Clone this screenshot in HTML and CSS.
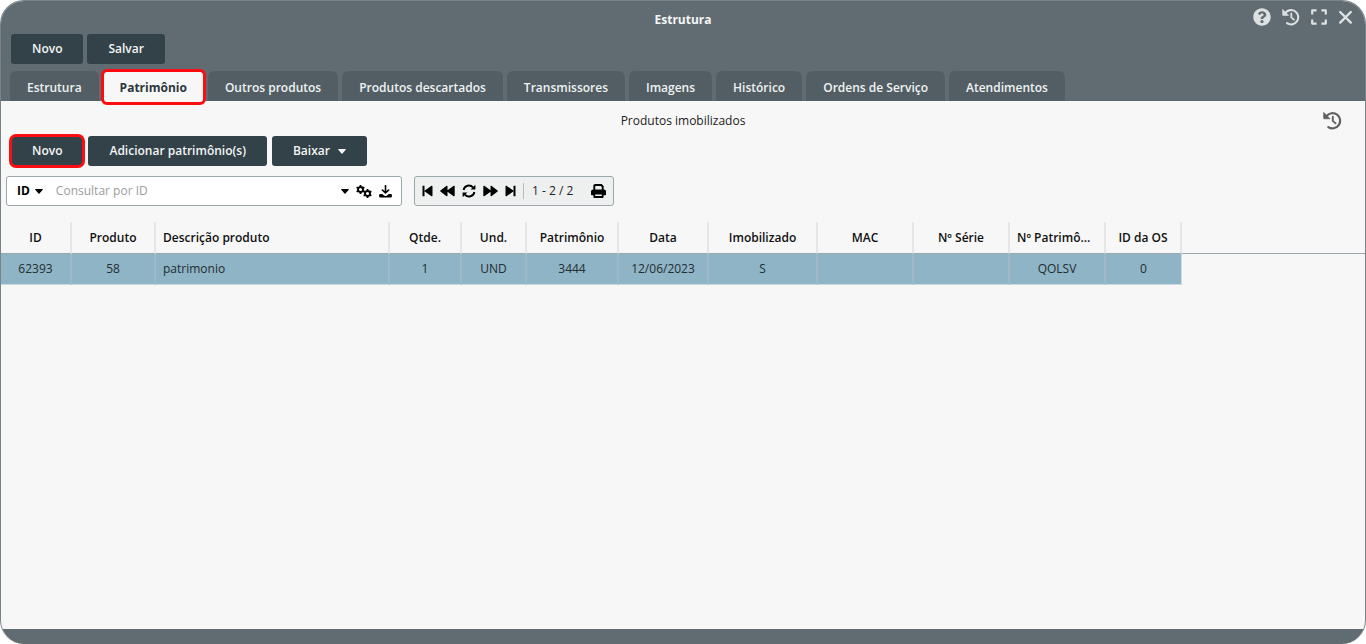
FILE: index.html
```html
<!DOCTYPE html>
<html lang="pt-BR">
<head>
<meta charset="utf-8">
<title>Estrutura</title>
<link rel="stylesheet" href="styles.css">
</head>
<body>
<svg class="defs" aria-hidden="true">
  <symbol id="history" viewBox="0 0 18 18">
    <path d="M3.4 4.8A7.2 7.2 0 1 1 5 15.2" fill="none" stroke="currentColor" stroke-width="2.1" stroke-linecap="round"/>
    <path d="M.6 1.3v5.6q0 .5.5.5h5.6z" fill="currentColor" stroke="currentColor" stroke-width=".6" stroke-linejoin="round"/>
    <path d="M9.3 5.4v4l2.6 2.3" fill="none" stroke="currentColor" stroke-width="1.8" stroke-linecap="round"/>
  </symbol>
  <symbol id="caret" viewBox="0 0 8 5"><path d="M.6 0h6.8q.8.1.3.8L4.5 4.6q-.5.5-1 0L.3.8Q-.2.1.6 0z" fill="currentColor"/></symbol>
  <symbol id="gear" viewBox="0 0 10 10">
    <circle cx="5" cy="5" r="2.8" fill="none" stroke="currentColor" stroke-width="2.1"/>
    <path d="M5 0v1.8M5 8.200V10M.7 2.500l1.500.9M7.800 6.600l1.500.9M.7 7.500l1.500-.9M7.800 3.400l1.500-.9" stroke="currentColor" stroke-width="2"/>
  </symbol>
</svg>
<main class="window">
  <header class="window-head">
    <div class="titlebar">
      <h1 class="title">Estrutura</h1>
      <div class="window-tools">
        <button class="icon-btn" aria-label="Ajuda"><svg width="18" height="18" viewBox="0 0 512 512"><path fill="currentColor" d="M504 256c0 136.997-111.043 248-248 248S8 392.997 8 256C8 119.083 119.043 8 256 8s248 111.083 248 248zM262.655 90c-54.497 0-89.255 22.957-116.549 63.758-3.536 5.286-2.353 12.415 2.715 16.258l34.699 26.31c5.205 3.947 12.621 3.008 16.665-2.122 17.864-22.658 30.113-35.797 57.303-35.797 20.429 0 45.698 13.148 45.698 32.958 0 14.976-12.363 22.667-32.534 33.976C247.128 238.528 216 254.941 216 296v4c0 6.627 5.373 12 12 12h56c6.627 0 12-5.373 12-12v-1.333c0-28.462 83.186-29.647 83.186-106.667 0-58.002-60.165-102-116.531-102zM256 338c-25.365 0-46 20.635-46 46 0 25.364 20.635 46 46 46s46-20.636 46-46c0-25.365-20.635-46-46-46z"/></svg></button>
        <button class="icon-btn" aria-label="Histórico"><svg width="18" height="18"><use href="#history"/></svg></button>
        <button class="icon-btn" aria-label="Expandir"><svg width="16" height="16" viewBox="0 0 16 16" fill="none" stroke="currentColor" stroke-width="2.2" stroke-linejoin="round"><path d="M1.2 5.6V1.4h4.4M10.4 1.4h4.4v4.2M14.8 10.4v4.2h-4.4M5.6 14.6H1.2v-4.2"/></svg></button>
        <button class="icon-btn" aria-label="Fechar"><svg width="15" height="15" viewBox="0 0 15 15" fill="none" stroke="currentColor" stroke-width="2.4" stroke-linecap="round"><path d="M2.2 2l10.6 10.6M12.8 2L2.2 12.6"/></svg></button>
      </div>
    </div>
    <div class="form-actions">
      <button class="btn">Novo</button>
      <button class="btn">Salvar</button>
    </div>
    <nav class="tabs" role="tablist">
      <button class="tab" role="tab">Estrutura</button>
      <button class="tab active" role="tab" aria-selected="true">Patrimônio</button>
      <button class="tab" role="tab">Outros produtos</button>
      <button class="tab" role="tab">Produtos descartados</button>
      <button class="tab" role="tab">Transmissores</button>
      <button class="tab" role="tab">Imagens</button>
      <button class="tab" role="tab">Histórico</button>
      <button class="tab" role="tab">Ordens de Serviço</button>
      <button class="tab" role="tab">Atendimentos</button>
    </nav>
  </header>

  <section class="panel">
    <div class="panel-head">
      <h2 class="panel-title">Produtos imobilizados</h2>
      <button class="icon-btn panel-history" aria-label="Histórico"><svg width="19" height="19"><use href="#history"/></svg></button>
    </div>
    <div class="panel-actions">
      <button class="btn marked">Novo</button>
      <button class="btn">Adicionar patrimônio(s)</button>
      <button class="btn">Baixar <svg class="btn-caret" width="8" height="5"><use href="#caret"/></svg></button>
    </div>
    <div class="filters">
      <div class="search">
        <button class="search-field">ID <svg width="8" height="5"><use href="#caret"/></svg></button>
        <input class="search-input" type="text" placeholder="Consultar por ID" aria-label="Consultar por ID">
        <button class="icon-btn" aria-label="Opções"><svg width="8" height="5"><use href="#caret"/></svg></button>
        <button class="icon-btn" aria-label="Configurações"><svg width="16" height="13" viewBox="0 0 16 13"><use href="#gear" x="0" y="0" width="9" height="9"/><use href="#gear" x="7" y="4" width="9" height="9"/></svg></button>
        <button class="icon-btn" aria-label="Exportar"><svg width="13" height="13" viewBox="0 0 13 13"><path d="M6.5.6v7M3.4 5l3.1 3L9.6 5" fill="none" stroke="currentColor" stroke-width="1.6" stroke-linecap="round" stroke-linejoin="round"/><path d="M1.2 9h2l1.900 1.400q1.400 1 2.800 0L9.800 9h2q1.100.1 1.100 1.100v1.400q-.1 1.100-1.100 1.100H1.200q-1-.1-1.100-1.100v-1.400Q.2 9.100 1.200 9z" fill="currentColor"/></svg></button>
      </div>
      <div class="pager">
        <button class="icon-btn" aria-label="Primeira"><svg width="11" height="12" viewBox="0.5 0 11 12" fill="currentColor"><path d="M1 .8h2v10.400H1zM10 .8q1-.3 1 .7v9q0 1-1 .7L3.300 6.500q-.5-.5 0-1z"/></svg></button>
        <button class="icon-btn" aria-label="Anterior"><svg width="15" height="12" viewBox="0 0 15 12" fill="currentColor"><path d="M6.600.8q.9-.3.900.7v3.700L13.700.8q1-.3 1 .7v9q0 1-1 .7L7.500 6.800v3.700q0 1-.9.7L.4 6.500q-.5-.5 0-1z"/></svg></button>
        <button class="icon-btn" aria-label="Atualizar"><svg width="14" height="14" viewBox="0 0 14 14"><path d="M1.600 6A5.400 5.400 0 0 1 11 3.400M12.400 8A5.400 5.400 0 0 1 3 10.600" fill="none" stroke="currentColor" stroke-width="1.900"/><path d="M13.400.8v4.800H8.600zM.6 13.200V8.400h4.800z" fill="currentColor"/></svg></button>
        <button class="icon-btn" aria-label="Próxima"><svg class="flip" width="15" height="12" viewBox="0 0 15 12" fill="currentColor"><path d="M6.600.8q.9-.3.900.7v3.700L13.700.8q1-.3 1 .7v9q0 1-1 .7L7.500 6.800v3.700q0 1-.9.7L.4 6.500q-.5-.5 0-1z"/></svg></button>
        <button class="icon-btn" aria-label="Última"><svg class="flip" width="11" height="12" viewBox="0.5 0 11 12" fill="currentColor"><path d="M1 .8h2v10.400H1zM10 .8q1-.3 1 .7v9q0 1-1 .7L3.300 6.500q-.5-.5 0-1z"/></svg></button>
        <span class="pager-count">1 - 2 / 2</span>
        <button class="icon-btn" aria-label="Imprimir"><svg width="15" height="14" viewBox="0 0 15 14"><path d="M3.300 6V2q0-1 1-1h5.900l1.500 1.500V6" fill="none" stroke="currentColor" stroke-width="1.900" stroke-linejoin="round"/><path d="M2 5.400h11q2 0 2 2v3q0 .8-.8.800H12V9.300H3v1.900H.8q-.8 0-.8-.8v-3q0-2 2-2z" fill="currentColor"/><path d="M3.300 9.500h8.400V13H3.300z" fill="none" stroke="currentColor" stroke-width="1.800" stroke-linejoin="round"/></svg></button>
      </div>
    </div>
    <div class="grid">
      <table class="grid-table">
        <colgroup><col class="c-id"><col class="c-prod"><col class="c-desc"><col class="c-qty"><col class="c-unit"><col class="c-pat"><col class="c-date"><col class="c-imob"><col class="c-wide"><col class="c-wide"><col class="c-wide"><col class="c-os"></colgroup>
        <thead><tr><th>ID</th><th>Produto</th><th class="left">Descrição produto</th><th>Qtde.</th><th>Und.</th><th>Patrimônio</th><th>Data</th><th>Imobilizado</th><th>MAC</th><th>Nº Série</th><th>Nº Patrimônio</th><th>ID da OS</th></tr></thead>
        <tbody><tr><td>62393</td><td>58</td><td class="left">patrimonio</td><td>1</td><td>UND</td><td>3444</td><td>12/06/2023</td><td>S</td><td></td><td></td><td>QOLSV</td><td>0</td></tr></tbody>
      </table>
    </div>
  </section>
  <footer class="window-foot"></footer>
</main>
</body>
</html>
```
FILE: styles.css
```css
* { box-sizing: border-box; }
body { margin: 0; background: #fff; color: #222; font: 12px/16px "Open Sans", "Noto Sans", sans-serif; }
button, input { font: inherit; color: inherit; border: 0; margin: 0; padding: 0; background: none; }
svg { display: block; flex: none; }
.defs { position: absolute; width: 0; height: 0; }
.flip { transform: scaleX(-1); }

.window { display: flex; flex-direction: column; min-height: 100vh; border: 1px solid #76848a; border-width: 1px 1px 0; border-radius: 24px; overflow: hidden; background: #f7f7f7; }
.window-head { background: #606c72; color: #f5f5f5; }
.titlebar { display: grid; grid-template-columns: 1fr auto 1fr; height: 33px; }
.title { grid-column: 2; margin: 0; padding-top: 11px; font-size: 12px; line-height: 16px; font-weight: 700; }
.window-tools { display: flex; align-items: center; justify-content: flex-end; gap: 11px; height: 32px; padding-right: 12px; color: #dde1e1; }
.icon-btn { display: flex; align-items: center; justify-content: center; }

.form-actions { display: flex; gap: 4px; padding: 0 10px; }
.btn { display: flex; align-items: center; height: 30px; padding: 0 21px; border-radius: 3px; background: #324248; color: #f5f5f5; font-weight: 600; }
.btn-caret { margin-left: 8px; }
.marked { border-radius: 5px; outline: 3px solid #fb0d12; outline-offset: -1px; }

.tabs { display: flex; gap: 4px; padding: 7px 9px 0; }
.tab { position: relative; height: 30px; padding: 3px 17px 0; border-radius: 6px 6px 0 0; background: #525e64; color: #f0f2f2; font-weight: 600; }
.tab.active { background: #f7f7f7; color: #2b383d; font-weight: 700; }
.tab.active::after { content: ""; position: absolute; inset: -2px -2px -4px; border: 3px solid #fb0d12; border-radius: 6px; }

.panel { flex: 1; display: flex; flex-direction: column; }
.panel-head { display: grid; grid-template-columns: 1fr auto 1fr; align-items: center; height: 35px; padding: 4px 23px 0; }
.panel-title { grid-column: 2; margin: 0; font-size: 12px; line-height: 16px; font-weight: 400; }
.panel-history { justify-self: end; color: #606060; }
.panel-actions { display: flex; gap: 5px; padding: 0 10px; }

.filters { display: flex; gap: 12px; padding: 10px 5px 0; color: #000; }
.search, .pager { display: flex; align-items: center; height: 30px; border: 1px solid #9ba7ab; border-radius: 3px; }
.search { flex: 0 1 396px; gap: 7px; padding: 0 9px 0 10px; background: #fff; }
.search-field { display: flex; align-items: center; gap: 5px; font-weight: 700; }
.search-input { flex: 1; min-width: 0; height: 28px; padding: 0 0 2px 6px; outline: 0; }
.search-input::placeholder { color: #9c9c9c; }
.pager { gap: 7px; width: 200px; padding: 0 7px; background: #eef0f0; }
.pager-count { flex: 1; padding-left: 8px; border-left: 1px solid #b4bcbf; color: #222; }

.grid { margin-top: 16px; overflow-x: auto; background: linear-gradient(#9ba7ab, #9ba7ab) 0 31px / 100% 1px no-repeat; }
.grid-table { width: 1181px; table-layout: fixed; border-collapse: separate; border-spacing: 0; }
.grid-table th, .grid-table td { height: 31px; padding: 0 7px; border-right: 2px solid #e6e6e6; text-align: center; white-space: nowrap; overflow: hidden; text-overflow: ellipsis; }
.grid-table th { height: 32px; border-bottom: 1px solid #9ba7ab; font-weight: 600; color: #111; }
.grid-table td { border-right-color: #9eb9c6; border-bottom: 1px solid #ccdae1; background: #8eb4c5; color: #222d32; }
.grid-table td:last-child { border-right: 1px solid #ccdae1; }
.grid-table .left { text-align: left; }
.c-id { width: 71px; }
.c-prod { width: 84px; }
.c-desc { width: 234px; }
.c-qty { width: 72px; }
.c-unit { width: 65px; }
.c-pat { width: 92px; }
.c-date { width: 90px; }
.c-imob { width: 109px; }
.c-wide { width: 96px; }
.c-os { width: 76px; }

.window-foot { height: 15px; background: #606c72; }
```
